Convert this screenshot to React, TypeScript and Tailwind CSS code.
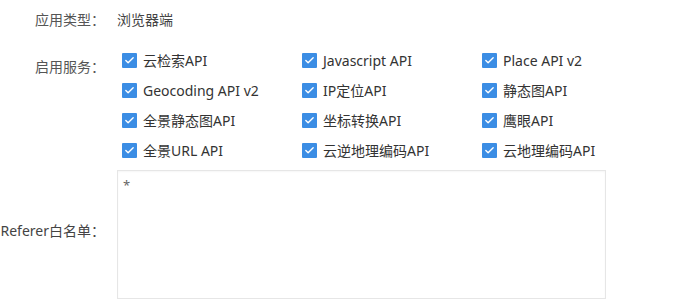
import { Check } from 'lucide-react';

const services = [
  '云检索API', 'Javascript API', 'Place API v2',
  'Geocoding API v2', 'IP定位API', '静态图API',
  '全景静态图API', '坐标转换API', '鹰眼API',
  '全景URL API', '云逆地理编码API', '云地理编码API',
];

function CheckItem({ label }: { label: string }) {
  return (
    <label className="flex items-center h-[30px]">
      <span className="w-[15px] h-[15px] bg-[#3b8de4] rounded-[1px] flex items-center justify-center ml-[5px]">
        <Check className="w-[11px] h-[11px] text-white" strokeWidth={3} />
      </span>
      <span className="ml-[6px] text-[#333]">{label}</span>
    </label>
  );
}

export default function App() {
  return (
    <div
      className="w-[694px] h-[303px] bg-white text-[14px] overflow-hidden"
      style={{ fontFamily: '"Noto Sans", "Noto Sans CJK SC", sans-serif' }}
    >
      <div className="flex pt-[8px] h-[45px] items-start">
        <div className="w-[105px] text-right text-[#555] leading-[24px]">应用类型：</div>
        <div className="ml-[12px] text-[#444] leading-[24px]">浏览器端</div>
      </div>
      <div className="flex">
        <div className="w-[105px] text-right text-[#555] pt-[10px] leading-[24px]">启用服务：</div>
        <div className="ml-[12px] grid grid-cols-[180px_180px_180px]">
          {services.map((s) => (
            <CheckItem key={s} label={s} />
          ))}
        </div>
      </div>
      <div className="flex items-center mt-[5px]">
        <div className="w-[105px] text-right text-[#444] leading-[24px] pb-[8px]">Referer白名单：</div>
        <textarea
          defaultValue="*"
          className="ml-[12px] w-[489px] h-[129px] border border-[#e6e6e6] shadow-[inset_0_1px_2px_rgba(0,0,0,0.04)] resize-none px-[5px] py-[5px] text-[#666] text-[13px] outline-none"
        />
      </div>
    </div>
  );
}
